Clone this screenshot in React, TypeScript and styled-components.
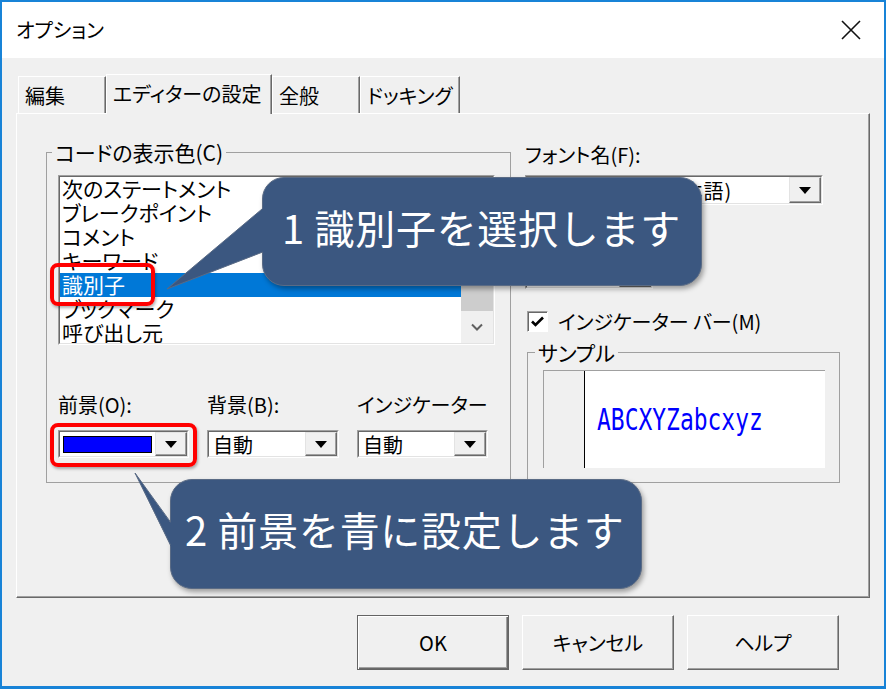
import styled, { createGlobalStyle } from 'styled-components';

const UI_FONT = '"Noto Sans CJK JP", "Noto Sans", sans-serif';

const GlobalStyle = createGlobalStyle`
  html, body {
    margin: 0;
    padding: 0;
    background: #fff;
  }

  * {
    box-sizing: border-box;
  }
`;

const Window = styled.div`
  position: relative;
  width: 886px;
  height: 689px;
  display: flex;
  flex-direction: column;
  overflow: hidden;
  border: 2px solid #1883d7;
  border-bottom-width: 3px;
  font-family: ${UI_FONT};
  font-size: 20px;
  font-feature-settings: 'palt';
  color: #000;
`;

const TitleBar = styled.header`
  flex: none;
  height: 56px;
  display: flex;
  align-items: center;
  justify-content: space-between;
  padding: 0 23px 0 14px;
  background: #fff;
`;

const Title = styled.span`
  font-size: 20px;
  line-height: 1;
`;

const Body = styled.main`
  flex: 1;
  display: flex;
  flex-direction: column;
  padding: 16px 14px 0;
  background: #f0f0f0;
`;

const TabStrip = styled.div`
  position: relative;
  z-index: 1;
  height: 39px;
  display: flex;
  align-items: flex-end;
  padding-left: 2px;
`;

const Tab = styled.div<{ $active?: boolean; $width: number }>`
  width: ${({ $width }) => $width}px;
  height: ${({ $active }) => ($active ? 40 : 37)}px;
  margin-bottom: ${({ $active }) => ($active ? -1 : 0)}px;
  display: flex;
  align-items: center;
  padding: 0 0 ${({ $active }) => ($active ? 3 : 0)}px 6px;
  background: #f0f0f0;
  border-top: 1px solid #fff;
  border-left: 1px solid #fff;
  border-right: 1px solid #696969;
  box-shadow: inset -1px 0 0 #a0a0a0;
  white-space: nowrap;
`;

const Panel = styled.section`
  height: 485px;
  display: flex;
  align-items: flex-start;
  gap: 14px;
  padding: 26px 28px 0 29px;
  border: 1px solid;
  border-color: #fff #696969 #696969 #fff;
  box-shadow: inset -1px -1px 0 #a0a0a0;
`;

const Group = styled.fieldset<{ $width: number; $pad: string }>`
  width: ${({ $width }) => $width}px;
  min-width: 0;
  margin: 0;
  padding: ${({ $pad }) => $pad};
  border: 1px solid #a0a0a0;
`;

const Legend = styled.legend<{ $shift: number }>`
  margin-left: ${({ $shift }) => $shift}px;
  padding: 0 3px;
  font-size: 21px;
  line-height: 24px;
  white-space: nowrap;
`;

const ListBox = styled.div`
  width: 437px;
  height: 170px;
  border: 1px solid;
  border-color: #a0a0a0 #fff #fff #a0a0a0;
`;

const ListInner = styled.div`
  height: 100%;
  display: flex;
  background: #fff;
  border: 1px solid;
  border-color: #696969 #e3e3e3 #e3e3e3 #696969;
`;

const ListItems = styled.div`
  flex: 1;
  overflow: hidden;
`;

const ListItem = styled.div<{ $selected?: boolean }>`
  height: 24px;
  line-height: 23px;
  padding-left: 2px;
  font-size: 21px;
  white-space: nowrap;
  background: ${({ $selected }) => ($selected ? '#0078d7' : 'transparent')};
  color: ${({ $selected }) => ($selected ? '#fff' : '#000')};
`;

const ScrollBar = styled.div`
  width: 32px;
  display: flex;
  flex-direction: column;
  background: #f0f0f0;
`;

const ScrollArrow = styled.div<{ $height: number }>`
  height: ${({ $height }) => $height}px;
  display: flex;
  align-items: center;
  justify-content: center;
`;

const ScrollThumb = styled.div`
  height: 104px;
  background: #cdcdcd;
`;

const ColorGrid = styled.div`
  margin-top: 48px;
  display: grid;
  grid-template-columns: 131px 132px 131px;
  column-gap: 18px;
  row-gap: 13px;
`;

const FieldLabel = styled.div<{ $gap?: number }>`
  margin-top: ${({ $gap }) => $gap ?? 0}px;
  line-height: 24px;
  white-space: nowrap;
`;

const ComboBox = styled.div<{ $width?: number; $height?: number; $gap?: number }>`
  width: ${({ $width }) => ($width ? `${$width}px` : '100%')};
  height: ${({ $height }) => $height ?? 28}px;
  margin-top: ${({ $gap }) => $gap ?? 0}px;
  border: 1px solid;
  border-color: #a0a0a0 #fff #fff #a0a0a0;
`;

const ComboInner = styled.div`
  height: 100%;
  display: flex;
  background: #fff;
  border: 1px solid;
  border-color: #696969 #e3e3e3 #e3e3e3 #696969;
`;

const ComboValue = styled.div`
  flex: 1;
  min-width: 0;
  display: flex;
  align-items: center;
  padding-left: 4px;
  overflow: hidden;
  white-space: nowrap;
`;

const FontName = styled.span`
  letter-spacing: 1px;
`;

const ColorSwatch = styled.span<{ $color: string }>`
  width: 89px;
  height: 17px;
  margin-left: -1px;
  background: ${({ $color }) => $color};
  border: 1px solid #000;
`;

const ComboButton = styled.div`
  width: 32px;
  flex: none;
  display: flex;
  align-items: center;
  justify-content: center;
  background: #f0f0f0;
  border: 1px solid;
  border-color: #e3e3e3 #696969 #696969 #e3e3e3;
  box-shadow: inset -1px -1px 0 #a0a0a0;
`;

const DropArrow = styled.span`
  width: 0;
  height: 0;
  border-left: 6px solid transparent;
  border-right: 6px solid transparent;
  border-top: 7px solid #000;
`;

const RightColumn = styled.div`
  width: 315px;
  display: flex;
  flex-direction: column;
  padding-top: 3px;
`;

const CheckRow = styled.label`
  height: 24px;
  margin-top: 20px;
  display: flex;
  align-items: center;
  gap: 10px;
  padding-left: 2px;
  white-space: nowrap;
`;

const CheckBox = styled.span`
  width: 21px;
  height: 21px;
  display: flex;
  align-items: center;
  justify-content: center;
  background: #fff;
  border: 1px solid;
  border-color: #a0a0a0 #fff #fff #a0a0a0;
  box-shadow: inset 1px 1px 0 #696969;
`;

const SampleGroup = styled(Group)`
  margin: 7px 0 0 2px;
`;

const SampleBox = styled.div`
  height: 98px;
  display: flex;
  border-top: 1px solid #a0a0a0;
  border-left: 1px solid #a0a0a0;
`;

const Gutter = styled.div`
  width: 41px;
  background: #f0f0f0;
  border-right: 1px solid #000;
`;

const SampleText = styled.div`
  flex: 1;
  display: flex;
  align-items: center;
  padding-left: 12px;
  background: #fff;
  color: #0000ff;
  font-family: 'DejaVu Sans Mono', 'Liberation Mono', monospace;
  font-size: 30px;
  font-feature-settings: normal;
`;

const SampleGlyphs = styled.span`
  display: inline-block;
  transform: scaleX(0.765);
  transform-origin: left center;
`;

const ButtonRow = styled.div`
  display: flex;
  justify-content: flex-end;
  gap: 13px;
  padding: 17px 31px 0 0;
`;

const DialogButton = styled.button<{ $default?: boolean }>`
  width: 152px;
  height: 55px;
  padding: 0;
  font-family: inherit;
  font-size: 20px;
  font-feature-settings: 'palt';
  color: #000;
  background: #f0f0f0;
  border: 1px solid;
  border-color: ${({ $default }) =>
    $default ? '#646464' : '#fff #696969 #696969 #fff'};
  box-shadow: ${({ $default }) =>
    $default
      ? 'inset 1px 1px 0 #fff, inset -1px -1px 0 #696969, inset -2px -2px 0 #a0a0a0'
      : 'inset -1px -1px 0 #a0a0a0'};
`;

const Overlay = styled.div`
  position: absolute;
  left: -2px;
  top: -2px;
  width: 886px;
  height: 689px;
  pointer-events: none;
`;

const RedFrame = styled.div<{ $x: number; $y: number; $w: number; $h: number }>`
  position: absolute;
  left: ${({ $x }) => $x}px;
  top: ${({ $y }) => $y}px;
  width: ${({ $w }) => $w}px;
  height: ${({ $h }) => $h}px;
  border: 4px solid #ff0000;
  border-radius: 8px;
  box-shadow: 1px 2px 3px rgba(0, 0, 0, 0.3);
`;

const Callout = styled.div<{ $x: number; $y: number; $w: number; $h: number; $pad: number }>`
  position: absolute;
  left: ${({ $x }) => $x}px;
  top: ${({ $y }) => $y}px;
  width: ${({ $w }) => $w}px;
  height: ${({ $h }) => $h}px;
  display: flex;
  align-items: center;
  padding: 0 0 10px ${({ $pad }) => $pad}px;
  background: #3b5780;
  border: 1px solid #5a6b85;
  border-radius: 22px;
  box-shadow: 2px 3px 5px rgba(0, 0, 0, 0.35);
  color: #fff;
  font-size: 40px;
  letter-spacing: 0.7px;
  font-feature-settings: normal;
  white-space: nowrap;
`;

const Tails = styled.svg`
  position: absolute;
  left: 0;
  top: 0;
`;

const codeItems = [
  '次のステートメント',
  'ブレークポイント',
  'コメント',
  'キーワード',
  '識別子',
  'ブックマーク',
  '呼び出し元',
];

const tabs = [
  { label: '編集', width: 88 },
  { label: 'エディターの設定', width: 166, active: true },
  { label: '全般', width: 88 },
  { label: 'ドッキング', width: 100 },
];

const Combo = ({ children, width, height, gap }: {
  children?: React.ReactNode;
  width?: number;
  height?: number;
  gap?: number;
}) => (
  <ComboBox $width={width} $height={height} $gap={gap}>
    <ComboInner>
      <ComboValue>{children}</ComboValue>
      <ComboButton>
        <DropArrow />
      </ComboButton>
    </ComboInner>
  </ComboBox>
);

const App = () => (
  <>
    <GlobalStyle />
    <Window>
      <TitleBar>
        <Title>オプション</Title>
        <svg width="20" height="20" viewBox="0 0 20 20">
          <path d="M1 1 L19 19 M19 1 L1 19" stroke="#111" strokeWidth="1.6" />
        </svg>
      </TitleBar>
      <Body>
        <TabStrip>
          {tabs.map((tab) => (
            <Tab key={tab.label} $width={tab.width} $active={tab.active}>
              {tab.label}
            </Tab>
          ))}
        </TabStrip>
        <Panel>
          <Group $width={465} $pad="11px 15px 24px 11px">
            <Legend $shift={-6}>コードの表示色(C)</Legend>
            <ListBox>
              <ListInner>
                <ListItems>
                  {codeItems.map((item) => (
                    <ListItem key={item} $selected={item === '識別子'}>
                      {item}
                    </ListItem>
                  ))}
                </ListItems>
                <ScrollBar>
                  <ScrollArrow $height={30} />
                  <ScrollThumb />
                  <ScrollArrow $height={32}>
                    <svg width="12" height="8" viewBox="0 0 12 8">
                      <path d="M1 1.5 L6 6.5 L11 1.5" fill="none" stroke="#606060" strokeWidth="2" />
                    </svg>
                  </ScrollArrow>
                </ScrollBar>
              </ListInner>
            </ListBox>
            <ColorGrid>
              <FieldLabel>前景(O):</FieldLabel>
              <FieldLabel>背景(B):</FieldLabel>
              <FieldLabel>インジケーター</FieldLabel>
              <Combo>
                <ColorSwatch $color="#0000ff" />
              </Combo>
              <Combo>自動</Combo>
              <Combo>自動</Combo>
            </ColorGrid>
          </Group>
          <RightColumn>
            <FieldLabel>フォント名(F):</FieldLabel>
            <Combo width={298} height={30} gap={8}>
              <FontName>ＭＳ ゴシック (日本語)</FontName>
            </Combo>
            <FieldLabel $gap={24}>サイズ(S):</FieldLabel>
            <Combo width={128} height={30} gap={6}>
              10
            </Combo>
            <CheckRow>
              <CheckBox>
                <svg width="13" height="11" viewBox="0 0 13 11">
                  <path d="M1 5.5 L4.5 9 L12 1.5" fill="none" stroke="#000" strokeWidth="2.6" />
                </svg>
              </CheckBox>
              インジケーター バー(M)
            </CheckRow>
            <SampleGroup $width={313} $pad="6px 14px 14px 15px">
              <Legend $shift={-8}>サンプル</Legend>
              <SampleBox>
                <Gutter />
                <SampleText>
                  <SampleGlyphs>ABCXYZabcxyz</SampleGlyphs>
                </SampleText>
              </SampleBox>
            </SampleGroup>
          </RightColumn>
        </Panel>
        <ButtonRow>
          <DialogButton $default>OK</DialogButton>
          <DialogButton>キャンセル</DialogButton>
          <DialogButton>ヘルプ</DialogButton>
        </ButtonRow>
      </Body>
      <Overlay>
        <RedFrame $x={50} $y={263} $w={105} $h={43} />
        <RedFrame $x={50} $y={423} $w={147} $h={44} />
        <Callout $x={262} $y={177} $w={440} $h={109} $pad={19}>
          1 識別子を選択します
        </Callout>
        <Callout $x={170} $y={479} $w={472} $h={110} $pad={14}>
          2 前景を青に設定します
        </Callout>
        <Tails width="886" height="689" viewBox="0 0 886 689">
          <polygon points="268,204 167,289 268,250" fill="#3b5780" />
          <polyline points="262.5,208.6 167,289 262.5,252.1" fill="none" stroke="#5a6b85" strokeWidth="1" />
          <polygon points="135,473 176,530 176,557" fill="#3b5780" />
          <polyline points="170.5,522 135,473 170.5,545" fill="none" stroke="#5a6b85" strokeWidth="1" />
        </Tails>
      </Overlay>
    </Window>
  </>
);

export default App;
